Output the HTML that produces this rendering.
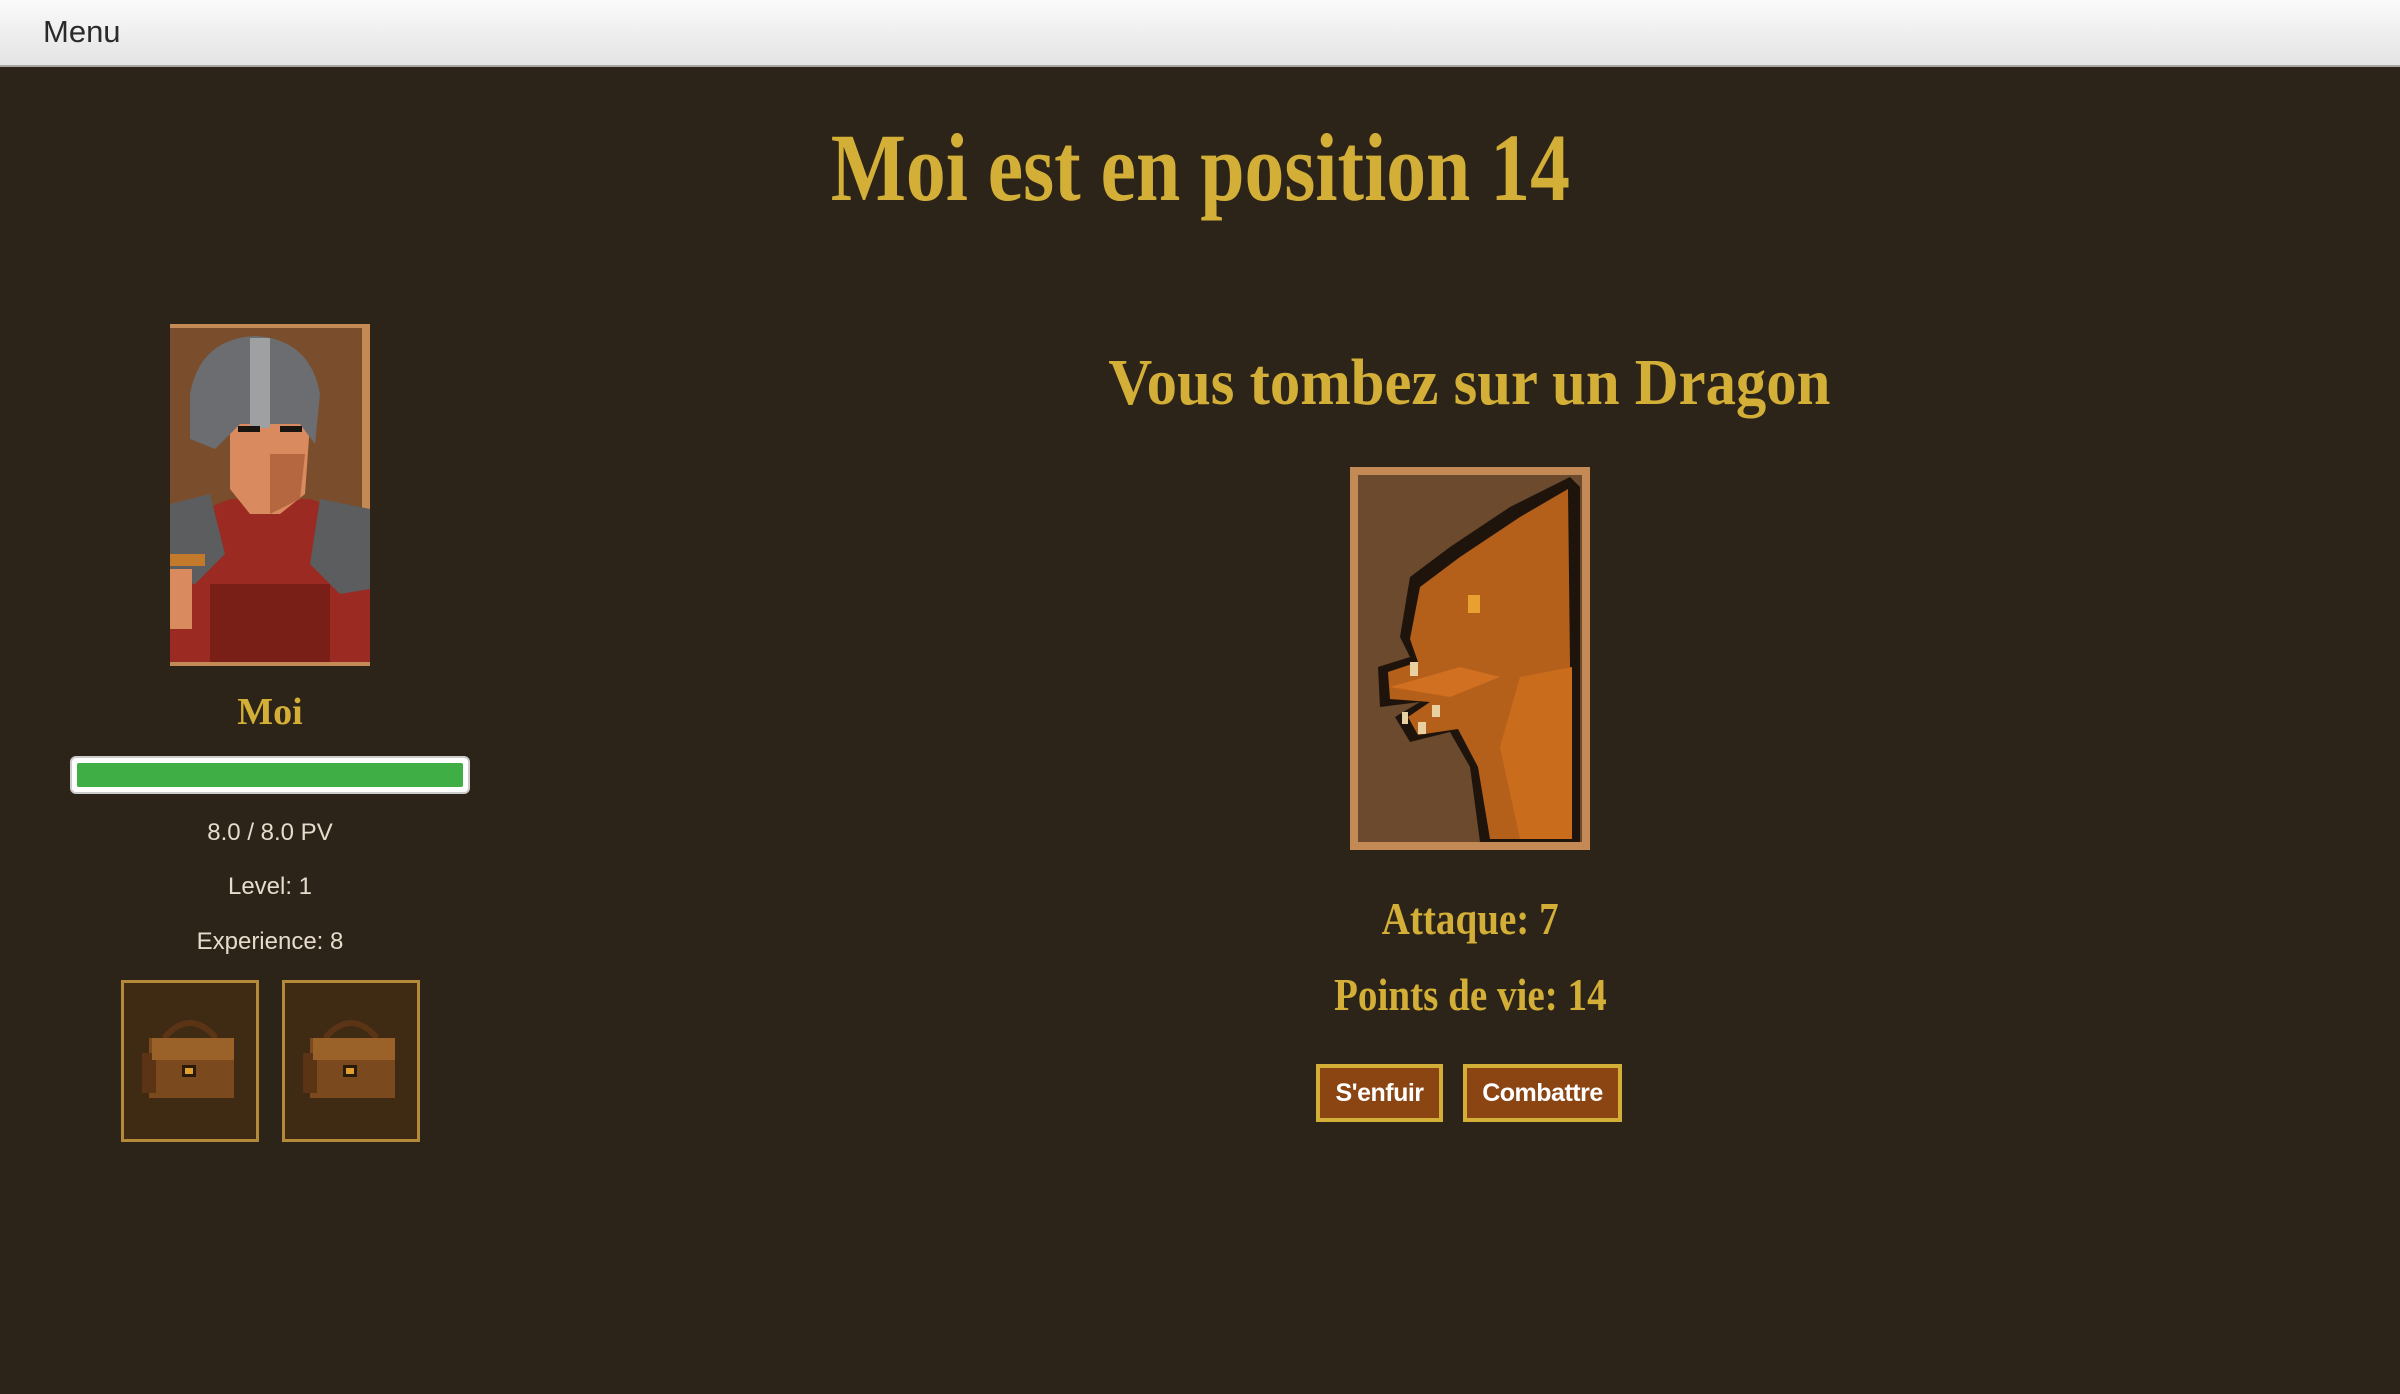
<!DOCTYPE html>
<html><head><meta charset="utf-8"><style>
*{margin:0;padding:0;box-sizing:border-box}
html,body{width:2400px;height:1394px;overflow:hidden;background:#2c2419;font-family:"Liberation Sans",sans-serif}
.menu{position:absolute;left:0;top:0;width:2400px;height:67px;background:linear-gradient(#fafafa,#e4e4e4);border-bottom:2px solid #a9a69f}
.menu span{position:absolute;left:43px;top:14px;font-size:31px;color:#2a2a2a}
.g{position:absolute;color:#d4af37;font-family:"Liberation Serif",serif;font-weight:bold;white-space:nowrap;text-align:center}
.t{position:absolute;color:#e6dccb;font-size:24px;width:400px;left:70px;text-align:center}
.slot{position:absolute;top:980px;width:138px;height:162px;border:3px solid #b48a3a;background:#3f2a14}
.btn{position:absolute;top:1064px;height:58px;background:#8b4513;border:4px solid #d4af37;color:#fff;font-weight:bold;font-size:25px;text-align:center;line-height:50px;letter-spacing:-0.5px}
</style></head><body>
<div class="menu"><span>Menu</span></div>

<div class="g" style="left:0;width:2400px;top:112px;font-size:96px"><span style="display:inline-block;transform:scaleX(0.83)">Moi est en position 14</span></div>

<svg style="position:absolute;left:170px;top:324px" width="200" height="342" viewBox="0 0 200 342">
<rect width="200" height="342" fill="#c48a55"/>
<rect x="0" y="4" width="192" height="334" fill="#7a4e2c"/>
<path d="M0 200 L60 175 L140 175 L200 195 L200 338 L0 338Z" fill="#9b2a22"/>
<path d="M40 260 L160 260 L160 338 L40 338Z" fill="#7a1e18"/>
<path d="M0 180 L40 170 L55 230 L25 260 L0 255Z" fill="#5c5d5e"/>
<path d="M200 185 L150 175 L140 240 L170 270 L200 265Z" fill="#5c5d5e"/>
<path d="M60 100 L140 100 L135 170 L110 190 L80 190 L60 165Z" fill="#d98a5e"/>
<path d="M100 130 L135 130 L130 175 L100 190Z" fill="#b5683f"/>
<path d="M20 70 Q30 15 85 12 Q140 15 150 70 L145 120 L130 100 L70 100 L45 125 L20 115Z" fill="#6b6d70"/>
<rect x="80" y="14" width="20" height="90" fill="#9ea0a2"/>
<rect x="68" y="102" width="22" height="6" fill="#1a1410"/><rect x="110" y="102" width="22" height="6" fill="#1a1410"/>
<rect x="0" y="230" width="35" height="12" fill="#c47a2c"/>
<rect x="0" y="245" width="22" height="60" fill="#d98a5e"/>
</svg>

<div class="g" style="left:170px;width:200px;top:690px;font-size:38px">Moi</div>
<div style="position:absolute;left:70px;top:756px;width:400px;height:38px;background:#fff;border:2px solid #ccc;border-radius:6px;padding:5px 5px"><div style="width:100%;height:100%;background:#3fae45;border-radius:2px"></div></div>
<div class="t" style="top:819px">8.0 / 8.0 PV</div>
<div class="t" style="top:873px">Level: 1</div>
<div class="t" style="top:928px">Experience: 8</div>

<div class="slot" style="left:121px"><svg width="132" height="156" viewBox="0 0 132 156"><path d="M40 55 Q66 25 92 55" stroke="#5a3415" stroke-width="6" fill="none"/><rect x="25" y="55" width="85" height="60" fill="#7a4a1e"/><rect x="18" y="70" width="14" height="40" fill="#5a3415"/><rect x="28" y="55" width="82" height="22" fill="#9a6228"/><rect x="58" y="82" width="14" height="12" fill="#2a1a0a"/><rect x="61" y="85" width="8" height="6" fill="#e0a030"/></svg></div>
<div class="slot" style="left:282px"><svg width="132" height="156" viewBox="0 0 132 156"><path d="M40 55 Q66 25 92 55" stroke="#5a3415" stroke-width="6" fill="none"/><rect x="25" y="55" width="85" height="60" fill="#7a4a1e"/><rect x="18" y="70" width="14" height="40" fill="#5a3415"/><rect x="28" y="55" width="82" height="22" fill="#9a6228"/><rect x="58" y="82" width="14" height="12" fill="#2a1a0a"/><rect x="61" y="85" width="8" height="6" fill="#e0a030"/></svg></div>

<div class="g" style="left:1069px;width:800px;top:345px;font-size:66px"><span style="display:inline-block;transform:scaleX(0.92)">Vous tombez sur un Dragon</span></div>

<svg style="position:absolute;left:1350px;top:467px" width="240" height="383" viewBox="0 0 240 383">
<rect width="240" height="383" fill="#c48a55"/>
<rect x="8" y="8" width="224" height="367" fill="#6b4a2e"/>
<path d="M130 375 L120 300 L100 265 L60 275 L45 250 L70 235 L30 240 L28 200 L60 190 L50 170 L60 110 L100 80 L160 40 L220 10 L230 20 L230 375Z" fill="#1e140c"/>
<path d="M140 372 L128 300 L108 262 L68 268 L58 250 L80 235 L40 232 L38 205 L68 195 L60 172 L70 120 L110 90 L170 50 L218 22 L222 372Z" fill="#b5601a"/>
<path d="M170 372 L150 280 L170 210 L222 200 L222 372Z" fill="#c96c1c"/>
<path d="M40 220 L110 200 L150 210 L100 230Z" fill="#d07020"/>
<rect x="118" y="128" width="12" height="18" fill="#e8a030"/>
<rect x="60" y="195" width="8" height="14" fill="#e8d0a0"/><rect x="82" y="238" width="8" height="12" fill="#e8d0a0"/><rect x="68" y="255" width="8" height="12" fill="#e8d0a0"/><rect x="52" y="245" width="6" height="12" fill="#e8d0a0"/>
</svg>

<div class="g" style="left:1270px;width:400px;top:892px;font-size:46px"><span style="display:inline-block;transform:scaleX(0.85)">Attaque: 7</span></div>
<div class="g" style="left:1270px;width:400px;top:968px;font-size:46px"><span style="display:inline-block;transform:scaleX(0.85)">Points de vie: 14</span></div>

<div class="btn" style="left:1316px;width:127px">S'enfuir</div>
<div class="btn" style="left:1463px;width:159px">Combattre</div>
</body></html>
